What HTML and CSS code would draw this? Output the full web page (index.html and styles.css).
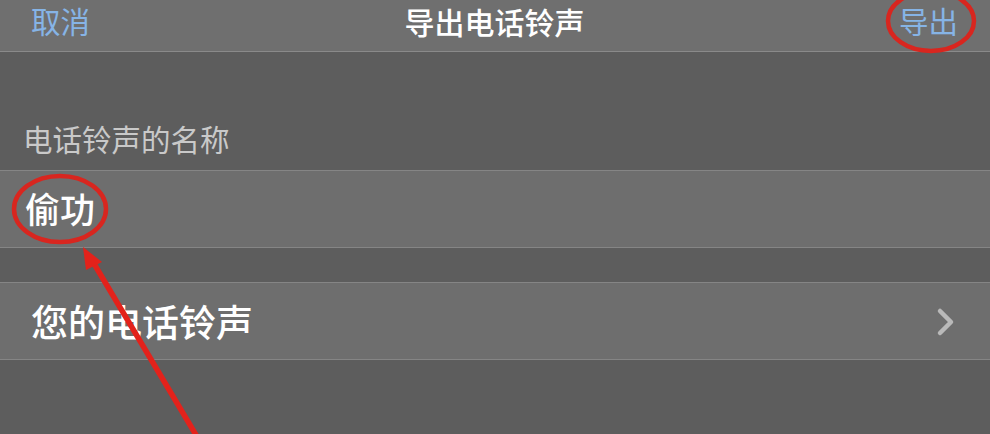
FILE: index.html
```html
<!DOCTYPE html>
<html lang="zh-CN">
<head>
<meta charset="utf-8">
<title>导出电话铃声</title>
<link rel="stylesheet" href="styles.css">
</head>
<body>
<div class="screen">
  <header class="nav">
    <span class="nav-btn">取消</span>
    <span class="nav-title">导出电话铃声</span>
    <span class="nav-btn">导出</span>
  </header>
  <div class="section-head">电话铃声的名称</div>
  <div class="row input-row">偷功</div>
  <div class="row link-row">
    <span>您的电话铃声</span>
    <svg class="chev" width="20" height="30" viewBox="0 0 20 30"><path d="M4 4 L15 15 L4 26" fill="none" stroke="#b9b9b9" stroke-width="4.5" stroke-linecap="round" stroke-linejoin="round"/></svg>
  </div>
  <svg class="marks" width="990" height="434" viewBox="0 0 990 434">
    <ellipse cx="931" cy="21" rx="43" ry="30" fill="none" stroke="#d8261f" stroke-width="4.5"/>
    <ellipse cx="60" cy="209" rx="46" ry="33" fill="none" stroke="#d8261f" stroke-width="4.5"/>
    <line x1="199" y1="440" x2="93" y2="262" stroke="#e3221b" stroke-width="5.5"/>
    <polygon points="83,247 102,262 86,270" fill="#e3221b"/>
  </svg>
</div>
</body>
</html>
```
FILE: styles.css
```css
html, body {
  margin: 0;
  padding: 0;
  background: #5d5d5d;
}
.screen {
  position: relative;
  width: 990px;
  height: 434px;
  overflow: hidden;
  background: #5d5d5d;
  font-family: "Noto Sans CJK SC", "Noto Sans", sans-serif;
}
.nav {
  height: 51px;
  background: #6f6f6f;
  border-bottom: 1px solid #8a8a8a;
  display: flex;
  align-items: center;
  justify-content: space-between;
  padding: 0 32px 0 31px;
  box-sizing: content-box;
}
.nav-btn {
  color: #86b4e6;
  font-size: 29.5px;
  line-height: 29px;
  margin-top: -10px;
}
.nav-title {
  color: #ffffff;
  font-size: 30px;
  line-height: 30px;
  font-weight: 500;
  margin-top: -10px;
  margin-left: 0;
}
.section-head {
  height: 118px;
  box-sizing: border-box;
  display: flex;
  align-items: flex-end;
  padding: 0 0 17px 23px;
  color: #c9c9c9;
  font-size: 29.5px;
  line-height: 29px;
}
.row {
  height: 78px;
  box-sizing: border-box;
  background: #6e6e6e;
  border-top: 1px solid #858585;
  border-bottom: 1px solid #858585;
  display: flex;
  align-items: center;
  color: #ffffff;
}
.input-row {
  padding-left: 25px;
  font-size: 35px;
  line-height: 35px;
  font-weight: 500;
  padding-bottom: 3px;
}
.link-row {
  margin-top: 34px;
  justify-content: space-between;
  padding: 0 34px 0 31px;
  font-size: 37px;
  line-height: 37px;
  font-weight: 500;
}
.chev {
  display: block;
  margin-top: 2px;
}
.marks {
  position: absolute;
  left: 0;
  top: 0;
  pointer-events: none;
}
```
